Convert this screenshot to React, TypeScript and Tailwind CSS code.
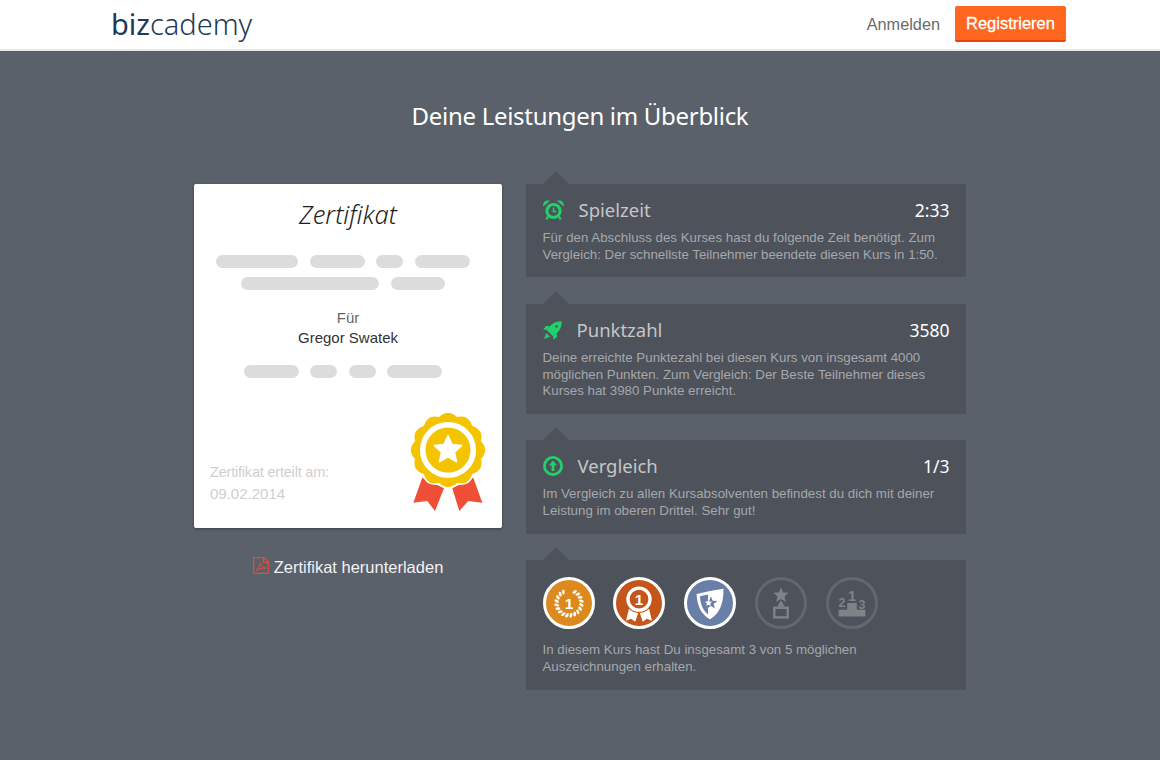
// App.tsx
const sans = "font-['Liberation_Sans',Arial,sans-serif]";
const head = "font-['Noto_Sans',sans-serif]";

function scallopPath(cx: number, cy: number, r: number, lobes: number, depth: number) {
  let d = "";
  const step = (Math.PI * 2) / lobes;
  for (let i = 0; i < lobes; i++) {
    const a = i * step - Math.PI / 2;
    const v = a + step / 2;
    const next = a + step;
    const p = (ang: number, rad: number) => `${(cx + Math.cos(ang) * rad).toFixed(2)} ${(cy + Math.sin(ang) * rad).toFixed(2)}`;
    if (i === 0) d += `M${p(a, r)}`;
    d += `Q${p(a + step / 4, r)} ${p(v, r - depth)}Q${p(next - step / 4, r)} ${p(next, r)}`;
  }
  return d + "Z";
}

function starPoints(cx: number, cy: number, r: number, inner: number) {
  const pts: string[] = [];
  for (let i = 0; i < 10; i++) {
    const a = (i * Math.PI) / 5 - Math.PI / 2;
    const rad = i % 2 === 0 ? r : inner;
    pts.push(`${(cx + Math.cos(a) * rad).toFixed(2)},${(cy + Math.sin(a) * rad).toFixed(2)}`);
  }
  return pts.join(" ");
}

function Seal() {
  return (
    <svg width="76" height="100" viewBox="0 0 76 100" className="block">
      <path d="M12.300 65.700L3.300 90.700L17.300 89L25 99L34 76.300Z" fill="#ee4f36" />
      <path d="M63.300 65.700L72.300 90.700L58.300 89L49.300 99L42.300 76.300Z" fill="#ee4f36" />
      <path d={scallopPath(38, 38, 38, 12, 3)} fill="#f5c400" stroke="#fff" strokeWidth="1.500" />
      <circle cx="38" cy="38" r="25.300" fill="none" stroke="#fff" strokeWidth="5.500" />
      <polygon points={starPoints(38, 38, 14.500, 6.800)} fill="#fff" stroke="#fff" strokeWidth="1.500" strokeLinejoin="round" />
    </svg>
  );
}

function AlarmIcon() {
  return (
    <svg width="21" height="20" viewBox="0 0 21 20" className="block">
      <circle cx="10.500" cy="11" r="6.600" fill="none" stroke="#22d06c" strokeWidth="3" />
      <path d="M10.500 7.500v4h2.800" fill="none" stroke="#22d06c" strokeWidth="1.500" />
      <path d="M.4 6.500C-.8 2.500 3 -.8 7 .8Z M20.600 6.500C21.800 2.500 18 -.8 14 .8Z" fill="#22d06c" />
      <path d="M5 16.500L3.300 19.500M16 16.500L17.700 19.500" stroke="#22d06c" strokeWidth="2.200" />
    </svg>
  );
}

function RocketIcon() {
  return (
    <svg width="19" height="19" viewBox="0 0 19 19" className="block">
      <path d="M18.800.2C13.500.2 9.500 2 6.500 5.500L4 9.300L9.700 15L13.500 12.500C17 9.500 18.800 5.500 18.800.2Z" fill="#22d06c" />
      <path d="M6.500 5H3L.2 8.800H4.400ZM14 12.500V16L10.200 18.800V14.600ZM3.300 12L7 15.700L1 18Z" fill="#22d06c" />
      <circle cx="13.500" cy="5.500" r="1.200" fill="#4e525a" />
    </svg>
  );
}

function UpIcon() {
  return (
    <svg width="20" height="20" viewBox="0 0 20 20" className="block">
      <circle cx="10" cy="10" r="8.600" fill="none" stroke="#22d06c" strokeWidth="2.800" />
      <path d="M10 4.500L14 9.500H11.400V15H8.600V9.500H6Z" fill="#22d06c" />
    </svg>
  );
}

function PdfIcon() {
  return (
    <svg width="16" height="17" viewBox="0 0 16 17" fill="none" stroke="#e0503f" strokeWidth="1.200" className="block -mt-[3px]">
      <path d="M.7.700H11L15.300 5V16.300H.7Z" />
      <path d="M10.500.700V5.500H15.300" />
      <path d="M3 13.500C5 12.500 7 9 7.500 5.500C8 9 10 11 13 11C10 10.800 6 11.500 3 13.500Z" strokeWidth="1" />
    </svg>
  );
}

function Laurel() {
  const leaves = Array.from({ length: 20 }, (_, i) => i * 18 + 9).filter((a) => a !== 9 && a !== 351);
  return (
    <svg width="46" height="46" viewBox="0 0 48 48" className="block">
      {leaves.map((a) => (
        <ellipse key={a} cx="24" cy="11" rx="1.400" ry="2.600" fill="#fff" transform={`rotate(${a} 24 24) rotate(25 24 11)`} />
      ))}
      <text x="24" y="30" textAnchor="middle" fontSize="16" fontWeight="700" fill="#fff" fontFamily="Liberation Sans, sans-serif">1</text>
    </svg>
  );
}

function Rosette() {
  return (
    <svg width="46" height="46" viewBox="0 0 48 48" className="block">
      <path d="M14 28L10.500 42.500L16 40.500L20 43.500L24 32ZM34 28L37.500 42.500L32 40.500L28 43.500L24 32Z" fill="#fff" />
      <circle cx="24" cy="20" r="14.500" fill="#c4561c" />
      <circle cx="24" cy="20" r="11.500" fill="none" stroke="#fff" strokeWidth="3.500" />
      <text x="24" y="26" textAnchor="middle" fontSize="16" fontWeight="700" fill="#fff" fontFamily="Liberation Sans, sans-serif">1</text>
    </svg>
  );
}

function Shield() {
  return (
    <svg width="46" height="46" viewBox="0 0 48 48" className="block">
      <path d="M10 14.500L24 11.500L38 9C38.500 24 34 35 24 41C15 36 10.500 27 10 14.500Z" fill="#fff" />
      <path d="M13.500 17L22 15V36C17 32 14 26 13.500 17Z" fill="#6a7fa8" />
      <polygon points={starPoints(25, 24, 7, 3)} fill="#6a7fa8" />
      <polygon points={starPoints(22.500, 24, 4, 1.800)} fill="#fff" />
    </svg>
  );
}

function TrophyStar() {
  return (
    <svg width="46" height="46" viewBox="0 0 48 48" className="block">
      <polygon points={starPoints(24, 16, 8.500, 3.800)} fill="#7f8287" />
      <path d="M24 21L28 28H20Z" fill="#7f8287" />
      <rect x="17" y="29" width="14" height="10" fill="none" stroke="#7f8287" strokeWidth="2.500" />
    </svg>
  );
}

function Podium() {
  return (
    <svg width="46" height="46" viewBox="0 0 48 48" className="block">
      <path d="M19 24H29V31H38V38H10V31H19Z" fill="#7f8287" />
      <g fontFamily="Liberation Sans, sans-serif" fontWeight="700" fill="#7f8287" textAnchor="middle">
        <text x="24" y="22" fontSize="16">1</text>
        <text x="13.500" y="28" fontSize="13">2</text>
        <text x="34.500" y="30" fontSize="13">3</text>
      </g>
    </svg>
  );
}

function Bars({ items }: { items: number[] }) {
  return (
    <div className="flex justify-center gap-[11.500px] pr-[10px]">
      {items.map((w, i) => (
        <div key={i} className="h-[13px] rounded-full bg-[#dcdcdc]" style={{ width: w }} />
      ))}
    </div>
  );
}

function Panel({ children, className }: { children: React.ReactNode; className: string }) {
  return (
    <div className={`relative bg-[#4e525a] px-[16.500px] ${className}`}>
      <div className="absolute left-[17px] -top-[13px] w-0 h-0 border-x-[13px] border-x-transparent border-b-[13px] border-b-[#4e525a]" />
      {children}
    </div>
  );
}

function StatHead({ icon, gap, title, value }: { icon: React.ReactNode; gap: string; title: string; value: string }) {
  return (
    <div className={`flex items-center h-[20px] ${head}`}>
      <div className={`shrink-0 ${gap}`}>{icon}</div>
      <span className="text-[18.500px] text-[#c4c6c9]">{title}</span>
      <span className="ml-auto text-[17.500px] text-white">{value}</span>
    </div>
  );
}

const Body = ({ children }: { children: React.ReactNode }) => (
  <p className={`${sans} text-[13.300px] leading-[16.500px] text-[#a5a8ac]`}>{children}</p>
);

const Badge = ({ color, children }: { color: string; children: React.ReactNode }) => (
  <div className={`w-[52px] h-[52px] rounded-full border-[3px] flex items-center justify-center shrink-0 ${color}`}>{children}</div>
);

export default function App() {
  return (
    <div className="w-[1160px] h-[760px] overflow-hidden bg-[#5a616a]">
      {/* header */}
      <header className="h-[51px] bg-white border-b-2 border-[#e8e9ea] flex items-center pl-[112px] pr-[94px]">
        <div className={`${head} text-[29px] leading-none text-[#1d3a58] -mt-[2px] -ml-[1px]`}>
          <span>biz</span>
          <span className="font-light">cademy</span>
        </div>
        <a className={`${sans} ml-auto text-[16.300px] text-[#6b6b6b]`}>Anmelden</a>
        <button className={`${sans} ml-[15px] -mt-[2px] pt-[1px] w-[111px] h-[36px] rounded-[2px] bg-[#ff6620] border-b-2 border-[#e8440a] text-[16.500px] text-white [-webkit-text-stroke:0.3px_white]`}>
          Registrieren
        </button>
      </header>

      <h1 className={`${head} mt-[47px] text-center text-[24px] leading-[36px] tracking-[-0.3px] text-white`}>Deine Leistungen im Überblick</h1>

      <div className="mt-[50px] flex justify-center gap-6">
        {/* certificate */}
        <div className="w-[308px]">
          <div className="h-[344px] bg-white rounded-[2px] shadow-[0_1px_3px_rgba(0,0,0,0.35)] flex flex-col">
            <div className={`${head} font-light italic text-center text-[25.500px] leading-[34px] text-[#1f1f1f] mt-[13px]`}>Zertifikat</div>
            <div className="mt-[24px] flex flex-col gap-[9px]">
              <Bars items={[82, 55, 27, 55]} />
              <Bars items={[138, 54]} />
            </div>
            <div className={`${sans} mt-[18px] text-center text-[15px] leading-[20px]`}>
              <div className="text-[#666]">Für</div>
              <div className="text-[#333]">Gregor Swatek</div>
            </div>
            <div className="mt-[17px]">
              <Bars items={[55, 27, 27, 55]} />
            </div>
            <div className="mt-auto flex items-end justify-between pl-4 pr-[16px] pb-[16px]">
              <div className={`${sans} text-[15px] leading-[21px] text-[#cfcfcf] pb-[8px]`}>
                <span className="text-[14.500px] tracking-[-0.2px]">Zertifikat erteilt am:</span>
                <br />
                09.02.2014
              </div>
              <Seal />
            </div>
          </div>
          <div className={`${sans} mt-[27px] flex items-center justify-center gap-[5px] text-[16.500px] text-[#f2f2f3]`}>
            <PdfIcon />
            Zertifikat herunterladen
          </div>
        </div>

        {/* stats */}
        <div className="w-[440px] flex flex-col gap-[27px]">
          <Panel className="h-[93px] pt-[16px]">
            <StatHead icon={<AlarmIcon />} gap="mr-[15px]" title="Spielzeit" value="2:33" />
            <div className="mt-[10px]">
              <Body>
                Für den Abschluss des Kurses hast du folgende Zeit benötigt. Zum
                <br />
                Vergleich: Der schnellste Teilnehmer beendete diesen Kurs in 1:50.
              </Body>
            </div>
          </Panel>
          <Panel className="h-[110px] pt-[16px]">
            <StatHead icon={<RocketIcon />} gap="mr-[15px]" title="Punktzahl" value="3580" />
            <div className="mt-[10px]">
              <Body>
                Deine erreichte Punktezahl bei diesen Kurs von insgesamt 4000
                <br />
                möglichen Punkten. Zum Vergleich: Der Beste Teilnehmer dieses
                <br />
                Kurses hat 3980 Punkte erreicht.
              </Body>
            </div>
          </Panel>
          <Panel className="h-[94px] pt-[16px] -mt-[1px]">
            <StatHead icon={<UpIcon />} gap="mr-[15px]" title="Vergleich" value="1/3" />
            <div className="mt-[10px]">
              <Body>
                Im Vergleich zu allen Kursabsolventen befindest du dich mit deiner
                <br />
                Leistung im oberen Drittel. Sehr gut!
              </Body>
            </div>
          </Panel>
          <Panel className="h-[130px] pt-[17px] -mt-[1px]">
            <div className="flex gap-[18.750px]">
              <Badge color="bg-[#dc8a1e] border-white"><Laurel /></Badge>
              <Badge color="bg-[#c4561c] border-white"><Rosette /></Badge>
              <Badge color="bg-[#6a7fa8] border-white"><Shield /></Badge>
              <Badge color="border-[#64676d]"><TrophyStar /></Badge>
              <Badge color="border-[#64676d]"><Podium /></Badge>
            </div>
            <div className="mt-[13px]">
              <Body>
                In diesem Kurs hast Du insgesamt 3 von 5 möglichen
                <br />
                Auszeichnungen erhalten.
              </Body>
            </div>
          </Panel>
        </div>
      </div>
    </div>
  );
}
